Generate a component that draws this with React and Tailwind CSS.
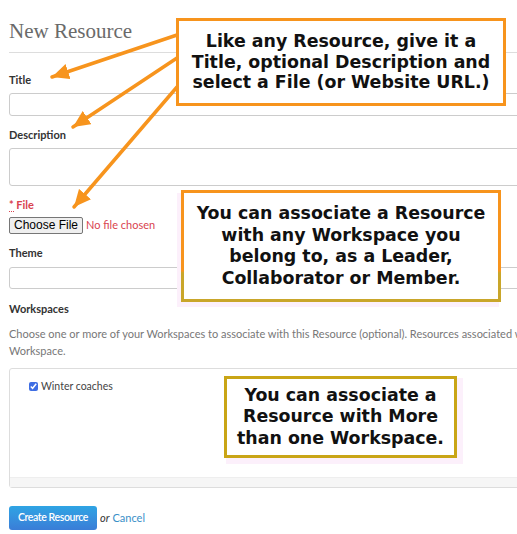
export default function App() {
  return (
    <div className="relative w-[517px] h-[534px] overflow-hidden bg-white font-['Lato',sans-serif]">
      <div className="w-[620px] pl-[9px] pt-[19px]">
        {/* Heading */}
        <h1 className="font-['Liberation_Serif',serif] text-[21px] leading-[25px] text-[#6a6a6a] pb-[8px] border-b border-[#dddddd]">
          New Resource
        </h1>

        {/* Title */}
        <label className="block mt-[19px] text-[11px] leading-[16px] font-bold text-[#333]">Title</label>
        <div className="mt-[5px] h-[23px] border border-[#cccccc] rounded-[3px] bg-white"></div>

        {/* Description */}
        <label className="block mt-[11px] text-[11px] leading-[16px] font-bold text-[#333]">Description</label>
        <div className="mt-[5px] h-[38px] border border-[#cccccc] rounded-[3px] bg-white"></div>

        {/* File */}
        <label className="block mt-[11px] text-[11px] leading-[16px] font-bold text-[#d9434f]">
          <abbr className="no-underline border-b border-dotted border-[#d9434f]">*</abbr> File
        </label>
        <div className="mt-[4px] flex items-center gap-[3px]">
          <button className="h-[17px] px-[4px] bg-[#efefef] border border-[#767676] rounded-[2px] font-['Liberation_Sans',sans-serif] text-[12px] leading-[15px] text-black">
            Choose File
          </button>
          <span className="text-[11px] text-[#d9434f]">No file chosen</span>
        </div>

        {/* Theme */}
        <label className="block mt-[11px] text-[11px] leading-[16px] font-bold text-[#333]">Theme</label>
        <div className="mt-[6px] h-[22px] border border-[#cccccc] rounded-[3px] bg-white"></div>

        {/* Workspaces */}
        <label className="block mt-[12px] text-[11px] leading-[16px] font-bold text-[#333]">Workspaces</label>
        <p className="mt-[8px] text-[11px] leading-[17px] text-[#777] whitespace-nowrap">
          Choose one or more of your Workspaces to associate with this Resource (optional). Resources associated with a Workspace are visible to all members of that
          <br />
          Workspace.
        </p>
        <div className="mt-[9px] h-[120px] border border-[#dddddd] rounded-[3px] flex flex-col">
          <div className="flex-1 pl-[19px] pt-[10px]">
            <label className="flex items-center gap-[3px] text-[10.5px] text-[#444]">
              <input type="checkbox" defaultChecked className="w-[9px] h-[9px] m-0 accent-[#3f6ee3]" />
              Winter coaches
            </label>
          </div>
          <div className="h-[10px] bg-[#f6f6f6] border-t border-[#eeeeee]"></div>
        </div>

        {/* Actions */}
        <div className="mt-[18px] flex items-center gap-[3px] text-[11px]">
          <button className="h-[24px] px-[9px] rounded-[3px] bg-linear-to-b from-[#2ea4e4] to-[#3a7dd7] text-white text-[10.5px] tracking-[-0.4px] font-semibold">
            Create Resource
          </button>
          <span className="italic text-[#333]">or</span>
          <a className="text-[#3a8fc8]">Cancel</a>
        </div>
      </div>

      {/* Annotation arrows */}
      <svg className="absolute inset-0 pointer-events-none" width="517" height="534" viewBox="0 0 517 534">
        <defs>
          <marker id="head" markerUnits="userSpaceOnUse" markerWidth="18" markerHeight="16" refX="17" refY="8" orient="auto">
            <path d="M0 0 L17 8 L0 16 Z" fill="#f7941d" />
          </marker>
        </defs>
        <g stroke="#f7941d" strokeWidth="3.5" strokeLinecap="round" fill="none">
          <line x1="177" y1="35" x2="52" y2="77" markerEnd="url(#head)" />
          <line x1="177" y1="58" x2="73" y2="127" markerEnd="url(#head)" />
          <line x1="177" y1="87" x2="74" y2="207" markerEnd="url(#head)" />
        </g>
      </svg>

      {/* Callouts */}
      <div className="absolute left-[176px] top-[18px] w-[330px] h-[88px] border-[3px] border-[#f7941d] bg-white flex items-center justify-center">
        <p className="font-['DejaVu_Sans',sans-serif] font-bold text-[17.4px] leading-[20.5px] text-[#111] text-center whitespace-nowrap">
          Like any Resource, give it a<br />
          Title, optional Description and<br />
          select a File (or Website URL.)
        </p>
      </div>

      <div className="absolute left-[181px] top-[190px] w-[320px] h-[112px] p-[3px] bg-linear-to-b from-[#f7941d] from-[72%] to-[#c9a62a] to-[74%] shadow-[-3px_4px_0_1px_#fcf0fb]">
        <div className="w-full h-full bg-white flex items-center justify-center">
          <p className="font-['DejaVu_Sans',sans-serif] font-bold text-[17.4px] leading-[21.5px] text-[#111] text-center whitespace-nowrap">
            You can associate a Resource<br />
            with any Workspace you<br />
            belong to, as a Leader,<br />
            Collaborator or Member.
          </p>
        </div>
      </div>

      <div className="absolute left-[224px] top-[376px] w-[233px] h-[82px] border-[3px] border-[#c9a516] bg-white flex items-center justify-center shadow-[4px_4px_0_2px_#fcf0fb]">
        <p className="font-['DejaVu_Sans',sans-serif] font-bold text-[17.4px] leading-[21.5px] text-[#111] text-center whitespace-nowrap">
          You can associate a<br />
          Resource with More<br />
          than one Workspace.
        </p>
      </div>
    </div>
  );
}
